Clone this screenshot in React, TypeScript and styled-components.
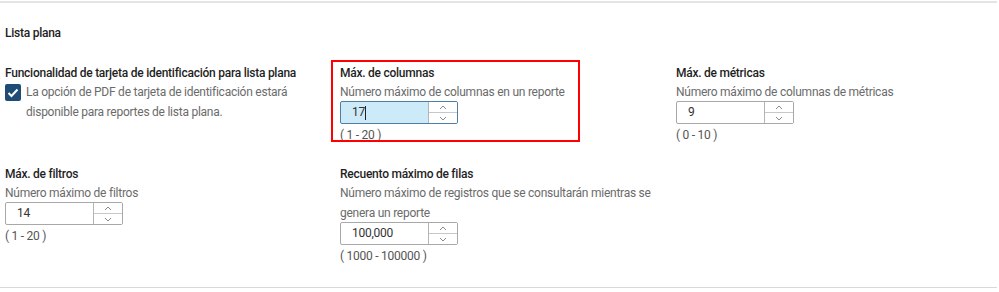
import React from "react";
import styled, { createGlobalStyle } from "styled-components";

const Global = createGlobalStyle`
  html, body { margin: 0; padding: 0; background: #fff; }
  body { font-family: Roboto, "Noto Sans", "Liberation Sans", sans-serif; font-size: 12px; letter-spacing: -0.25px; color: #222; }
`;

const Page = styled.div`
  width: 999px;
  height: 292px;
  box-sizing: border-box;
  padding-top: 1px;
`;

const Section = styled.section`
  border-top: 2px solid #e4e4e4;
  border-bottom: 1px solid #d9d9d9;
  width: 997px;
  padding: 21px 0 21px 5px;
  box-sizing: border-box;
`;

const Title = styled.div`
  font-weight: 500;
  line-height: 18px;
  color: #222;
`;

const Grid = styled.div`
  display: grid;
  grid-template-columns: 335px 336px 1fr;
  row-gap: 20px;
  margin-top: 22px;
  align-items: start;
`;

const Field = styled.div<{ $highlight?: boolean }>`
  position: relative;
  display: flex;
  flex-direction: column;
  &::after {
    content: "";
    display: ${(p) => (p.$highlight ? "block" : "none")};
    position: absolute;
    left: -9px;
    top: -4px;
    width: 245px;
    height: 78px;
    border: 2px solid #ff0000;
    pointer-events: none;
  }
`;

const Label = styled.div`
  font-weight: 500;
  line-height: 18px;
  color: #1f1f1f;
`;

const Desc = styled.div`
  color: #6b6b6b;
  line-height: 20px;
  max-width: 320px;
`;

const CheckRow = styled.div`
  display: flex;
  align-items: flex-start;
  gap: 5px;
`;

const Box = styled.span`
  flex: none;
  width: 16px;
  height: 17px;
  margin-top: 2px;
  border-radius: 2px;
  background: #1e4c77;
  display: flex;
  align-items: center;
  justify-content: center;
`;

const Spin = styled.div<{ $focus?: boolean; $w?: number }>`
  display: flex;
  width: ${(p) => p.$w ?? 118}px;
  height: 23px;
  margin-top: -1px;
  box-sizing: border-box;
  border: 1px solid ${(p) => (p.$focus ? "#4d7ea8" : "#a8a8a8")};
  border-radius: 2px;
  background: ${(p) => (p.$focus ? "#cdeaf8" : "#fff")};
  overflow: hidden;
`;

const Value = styled.div`
  flex: 1;
  padding-left: 11px;
  line-height: 21px;
  color: #333;
  display: flex;
  align-items: center;
`;

const Caret = styled.span`
  display: inline-block;
  width: 1px;
  height: 14px;
  background: #222;
`;

const Buttons = styled.div`
  width: 28px;
  flex: none;
  display: flex;
  flex-direction: column;
  border-left: 1px solid #b4b4b4;
  background: #fff;
`;

const Btn = styled.div<{ $top?: boolean }>`
  flex: 1;
  display: flex;
  align-items: center;
  justify-content: center;
  ${(p) => (p.$top ? "border-bottom: 1px solid #c8c8c8;" : "")}
`;

const Range = styled.div`
  color: #555;
  line-height: 20px;
  margin-top: 1px;
`;

const Chevron = ({ up }: { up?: boolean }) => (
  <svg width="8" height="5" viewBox="0 0 8 5">
    <path
      d={up ? "M1 4 L4 1 L7 4" : "M1 1 L4 4 L7 1"}
      fill="none"
      stroke="#8a8a8a"
      strokeWidth="1"
    />
  </svg>
);

const NumberInput = ({ value, focus, w }: { value: string; focus?: boolean; w?: number }) => (
  <Spin $focus={focus} $w={w}>
    <Value>
      {value}
      {focus && <Caret />}
    </Value>
    <Buttons>
      <Btn $top>
        <Chevron up />
      </Btn>
      <Btn>
        <Chevron />
      </Btn>
    </Buttons>
  </Spin>
);

export default function App() {
  return (
    <Page>
      <Global />
      <Section>
        <Title>Lista plana</Title>
        <Grid>
          <Field>
            <Label>Funcionalidad de tarjeta de identificación para lista plana</Label>
            <CheckRow>
              <Box>
                <svg width="12" height="10" viewBox="0 0 12 10">
                  <path d="M1.5 5 L4.5 8 L10.5 1.5" fill="none" stroke="#fff" strokeWidth="2" />
                </svg>
              </Box>
              <Desc>La opción de PDF de tarjeta de identificación estará disponible para reportes de lista plana.</Desc>
            </CheckRow>
          </Field>
          <Field $highlight>
            <Label>Máx. de columnas</Label>
            <Desc>Número máximo de columnas en un reporte</Desc>
            <NumberInput value="17" focus />
            <Range>( 1 - 20 )</Range>
          </Field>
          <Field>
            <Label>Máx. de métricas</Label>
            <Desc>Número máximo de columnas de métricas</Desc>
            <NumberInput value="9" />
            <Range>( 0 - 10 )</Range>
          </Field>
          <Field>
            <Label>Máx. de filtros</Label>
            <Desc>Número máximo de filtros</Desc>
            <NumberInput value="14" />
            <Range>( 1 - 20 )</Range>
          </Field>
          <Field>
            <Label>Recuento máximo de filas</Label>
            <Desc>Número máximo de registros que se consultarán mientras se genera un reporte</Desc>
            <NumberInput value="100,000" />
            <Range>( 1000 - 100000 )</Range>
          </Field>
        </Grid>
      </Section>
    </Page>
  );
}
